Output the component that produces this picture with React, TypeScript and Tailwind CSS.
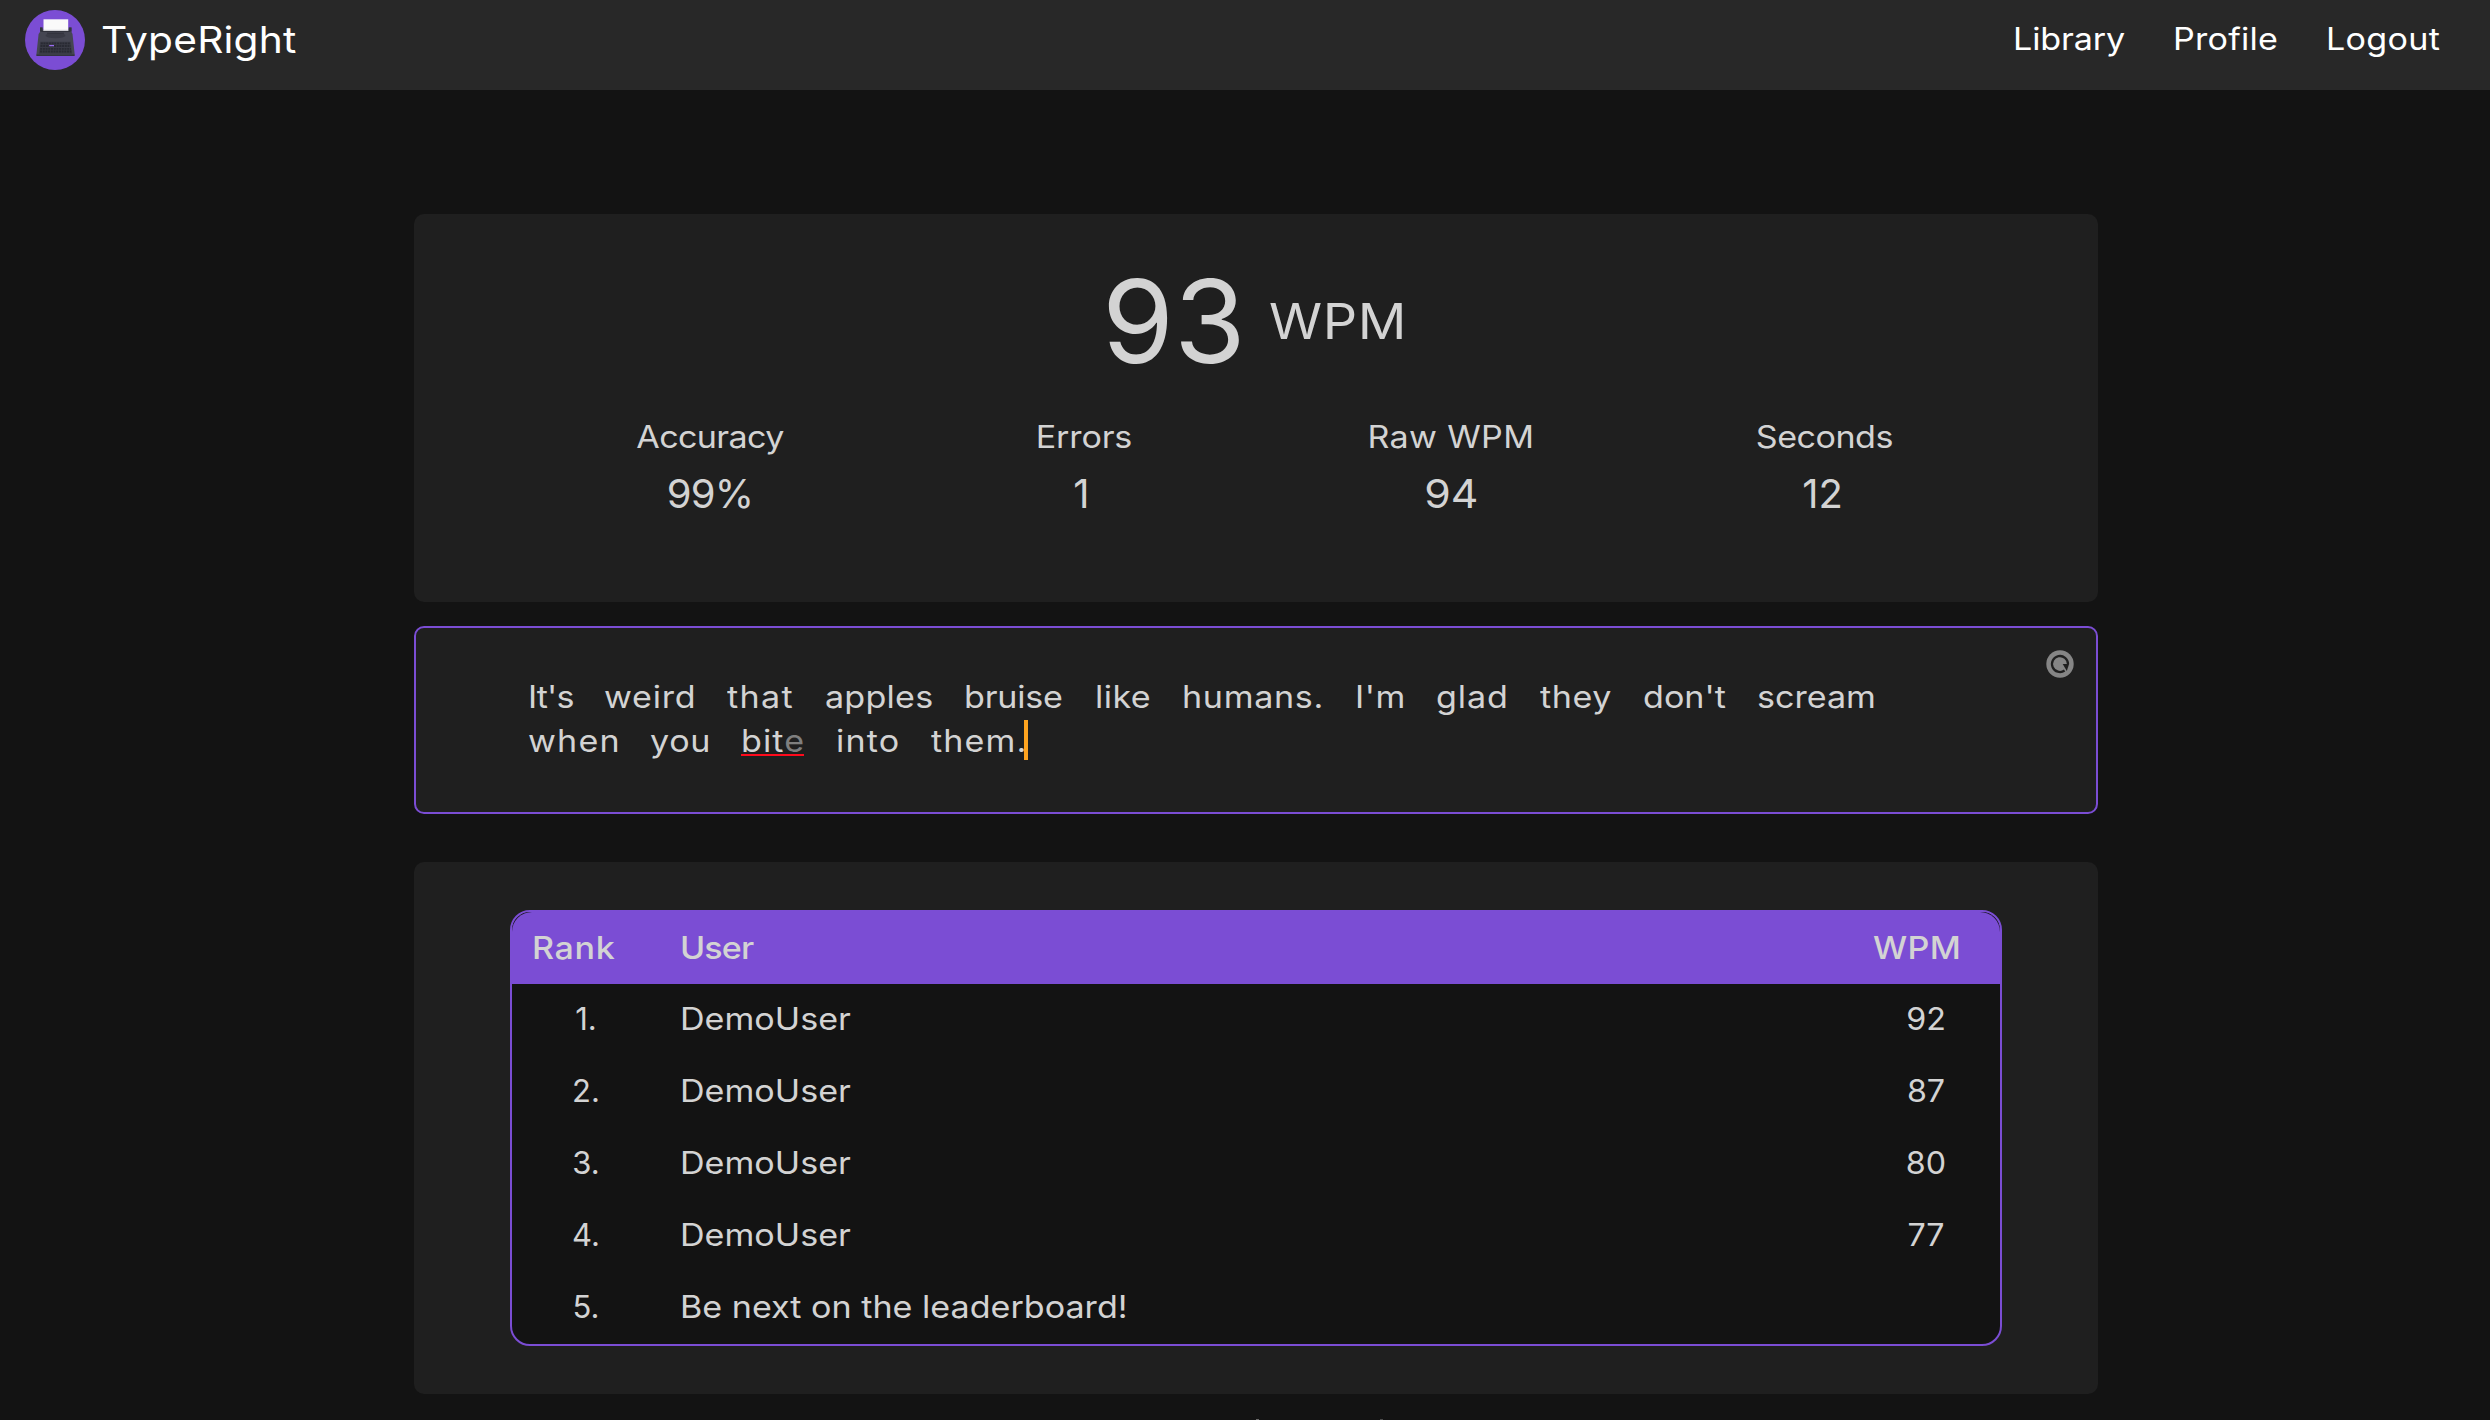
type Word = { text: string; box: string };

const firstLine: Word[] = [
  { text: "It's", box: "w-[76px] tracking-[-0.8px]" },
  { text: "weird", box: "w-[123px] tracking-[0.7px]" },
  { text: "that", box: "w-[97.5px] tracking-[1.2px]" },
  { text: "apples", box: "w-[139.5px] tracking-[0.2px]" },
  { text: "bruise", box: "w-[131px] tracking-[-0.2px]" },
  { text: "like", box: "w-[86.5px] tracking-[0.4px]" },
  { text: "humans.", box: "w-[173px] tracking-[0.6px]" },
  { text: "I'm", box: "w-[81.5px] tracking-[0.5px]" },
  { text: "glad", box: "w-[104px] tracking-[0.8px]" },
  { text: "they", box: "w-[103px] tracking-[0.5px]" },
  { text: "don't", box: "w-[114px]" },
  { text: "scream", box: "" },
];

const stats = [
  { label: "Accuracy", value: "99%", labelStyle: "tracking-[-0.6px]", valueStyle: "tracking-[-0.8px]" },
  { label: "Errors", value: "1", labelStyle: "pl-[3px] tracking-[-0.15px]", valueStyle: "pr-px" },
  { label: "Raw WPM", value: "94", labelStyle: "tracking-[0.3px]", valueStyle: "scale-x-[1.07]" },
  { label: "Seconds", value: "12", labelStyle: "tracking-[-0.45px]", valueStyle: "pr-[3px]" },
];

const rows = [
  { rank: "1.", user: "DemoUser", wpm: "92" },
  { rank: "2.", user: "DemoUser", wpm: "87" },
  { rank: "3.", user: "DemoUser", wpm: "80" },
  { rank: "4.", user: "DemoUser", wpm: "77" },
  { rank: "5.", user: "Be next on the leaderboard!", wpm: "" },
];

function Logo() {
  return (
    <svg viewBox="0 0 60 60" className="size-[60px] shrink-0">
      <circle cx="30" cy="30" r="30" fill="#7b4dd4" />
      <path d="M15 17.5h2.5v2h26v-2h3v4.5l1 2 2.2 20.5q.2 1.5-1.2 1.5H12.6q-1.3 0-1.2-1.5L13.6 24l1.4-2z" fill="#454652" />
      <path d="M15 17.5h2.5v4H15zM44 17.5h2.5v4H44z" fill="#33343e" />
      <path d="M18.5 9.3h24.7v11.500H18.5z" fill="#fafafa" />
      <path d="M18.5 19.8h24.7v1H18.5z" fill="#c9c9d0" />
      <path d="M16.5 21h28.5v1H16.5z" fill="#30313b" />
      <ellipse cx="30.5" cy="25.5" rx="10" ry="2.8" fill="#393a45" />
      <path d="M22 23.2h17" stroke="#30313b" strokeWidth="1" />
      <path d="M15.3 31.7h30.4l1.3 12H14z" fill="#393a45" />
      <g stroke="#292a33" strokeWidth="1.8" strokeDasharray="2 .7">
        <path d="M15.8 33.3h29.4" />
        <path d="M15.5 36h30" />
        <path d="M15.2 38.8h30.8" />
        <path d="M15 41.5h31.3" />
      </g>
      <path d="M24.2 35.6h4.8" stroke="#9a6cf0" strokeWidth="1.3" />
      <path d="M11.5 45.2h38" stroke="#33343e" strokeWidth="1.4" />
    </svg>
  );
}

function RestartIcon() {
  return (
    <svg viewBox="0 0 28 28" className="size-7">
      <circle cx="14" cy="14" r="13.7" fill="#858585" />
      <path d="M22 14A8 8 0 1 0 18.6 20.55" fill="none" stroke="#1f1f1f" strokeWidth="2.3" />
      <path d="M16.700 14h6.400l-2.300 7z" fill="#1f1f1f" />
    </svg>
  );
}

export default function App() {
  return (
    <div className="flex h-[1420px] w-[2490px] flex-col overflow-hidden bg-[#131313] font-['Inter',sans-serif] text-[31px] leading-[44px] whitespace-nowrap text-[#d3d3d3]">
      <nav className="flex h-[90px] shrink-0 justify-between bg-[#282828] pt-[10px] pl-[24.5px] text-white">
        <div className="flex h-[60px] items-center gap-[16px]">
          <Logo />
          <span className="origin-left scale-x-110 text-[37px] tracking-[0.2px]">TypeRight</span>
        </div>
        <div className="flex h-[57px] w-[476.7px] items-center">
          <a className="w-[159.700px] origin-left scale-x-110 tracking-[-0.1px]">Library</a>
          <a className="w-[153px] origin-left scale-x-110 tracking-[0.2px]">Profile</a>
          <a className="origin-left scale-x-110 tracking-[0.25px]">Logout</a>
        </div>
      </nav>

      <main className="mt-[124px] ml-[414px] flex w-[1684px] flex-col">
        <section className="h-[388px] rounded-[10px] bg-[#1f1f1f] pt-12">
          <div className="flex h-[120px] items-center pl-[688px]">
            <span className="w-[167px] origin-left scale-x-[1.01] text-[115px] leading-[120px]">93</span>
            <span className="origin-left scale-x-110 text-[49px] tracking-[0.5px]">WPM</span>
          </div>
          <div className="grid grid-cols-[372px_372px_366px_380px] pt-[33px] pl-[110px]">
            {stats.map((s) => (
              <div key={s.label} className="flex flex-col items-center gap-[11px]">
                <span className={`scale-x-110 ${s.labelStyle}`}>{s.label}</span>
                <span className={`text-[40px] leading-[48px] ${s.valueStyle}`}>{s.value}</span>
              </div>
            ))}
          </div>
        </section>

        <section className="mt-6 flex h-[188px] justify-between rounded-[10px] border-2 border-[#7b4dd4] bg-[#1f1f1f]">
          <div className="pt-[47px] pl-[112px]">
            <div className="flex">
              {firstLine.map((w) => (
                <span key={w.text} className={`shrink-0 origin-left scale-x-110 ${w.box}`}>{w.text}</span>
              ))}
            </div>
            <div className="flex">
              <span className="w-[122px] origin-left scale-x-110 tracking-[1.1px]">when</span>
              <span className="w-[91px] origin-left scale-x-110 tracking-[0.6px]">you</span>
              <span className="w-[95px]">
                <span className="relative inline-block w-[62.5px]">
                  <span className="inline-block origin-left scale-x-110 tracking-[1px]">
                    bit<span className="text-[#7f7f7f]">e</span>
                  </span>
                  <span className="absolute bottom-[7px] left-0 h-[2px] w-full bg-[#ff0a1c]" />
                </span>
              </span>
              <span className="w-[95px] origin-left scale-x-110 tracking-[1.1px]">into</span>
              <span className="relative w-[97px]">
                <span className="inline-block origin-left scale-x-110 tracking-[1px]">them.</span>
                <span className="absolute top-px right-0 h-10 w-1 bg-[#ffa41f]" />
              </span>
            </div>
          </div>
          <button className="mt-[22px] mr-[22px] size-7">
            <RestartIcon />
          </button>
        </section>

        <section className="mt-12 h-[532px] rounded-[10px] bg-[#1f1f1f] px-24 pt-12">
          <div className="h-[436px] rounded-[20px] border-2 border-[#7b4dd4] bg-[#131313]">
            <div className="flex h-[72px] items-center rounded-t-[20px] bg-[#7b4dd4] pb-px pl-5 font-medium">
              <span className="w-[148px] origin-left scale-x-110 tracking-[0.6px]">Rank</span>
              <span className="w-[1192.500px] origin-left scale-x-110 tracking-[-0.8px]">User</span>
              <span className="origin-left scale-x-110 tracking-[0.3px]">WPM</span>
            </div>
            {rows.map((r) => (
              <div key={r.rank} className="flex h-[72px] items-center pr-[34px] pb-[2px]">
                <span className="w-[148px] text-center">{r.rank}</span>
                <span className="ml-5 grow">
                  <span className="inline-block origin-left scale-x-110">{r.user}</span>
                </span>
                <span className="w-20 scale-x-[1.04] text-center">{r.wpm}</span>
              </div>
            ))}
          </div>
        </section>

        <footer className="mt-[25px] flex h-px gap-[121px] pl-[842px]">
          <span className="w-[3px] bg-[#6a6a6a]" />
          <span className="w-[3px] bg-[#4a4a4a]" />
        </footer>
      </main>
    </div>
  );
}
